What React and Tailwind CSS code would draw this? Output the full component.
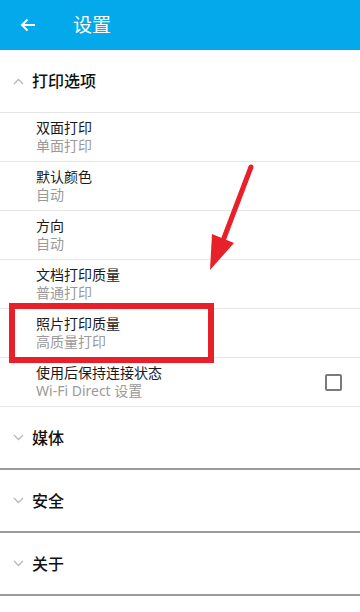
import { useState } from 'react'

const rows = [
  { title: '双面打印', sub: '单面打印' },
  { title: '默认颜色', sub: '自动' },
  { title: '方向', sub: '自动' },
  { title: '文档打印质量', sub: '普通打印' },
  { title: '照片打印质量', sub: '高质量打印' },
  { title: '使用后保持连接状态', sub: 'Wi-Fi Direct 设置', checkbox: true },
]

const collapsed = ['媒体', '安全', '关于']

function Chevron({ up }) {
  return (
    <svg width="11" height="7" viewBox="0 0 11 7" className="shrink-0">
      <path
        d={up ? 'M1 6 L5.5 1.5 L10 6' : 'M1 1 L5.5 5.5 L10 1'}
        fill="none"
        stroke="#b8b8b8"
        strokeWidth="1.3"
      />
    </svg>
  )
}

export default function App() {
  const [keep, setKeep] = useState(false)

  return (
    <div
      className="relative w-[360px] h-[612px] bg-white overflow-hidden"
      style={{ fontFamily: '"Noto Sans", "Noto Sans CJK SC", sans-serif' }}
    >
      {/* top bar */}
      <div className="flex items-center h-[50px] bg-[#03a9ea]">
        <svg width="16" height="14" viewBox="0 0 16 14" className="ml-[20px]">
          <path d="M15 7 H2 M7.5 1.5 L2 7 L7.5 12.5" fill="none" stroke="#fff" strokeWidth="2" />
        </svg>
        <span className="ml-[37px] text-[19px] text-white leading-none">设置</span>
      </div>

      {/* expanded section */}
      <div className="flex items-center gap-[8px] h-[63px] pl-[13px] border-b border-[#e6e6e6]">
        <Chevron up />
        <span className="text-[16px] font-medium text-[#111]">打印选项</span>
      </div>
      {rows.map((r) => (
        <div key={r.title} className="flex items-center h-[49px] pl-[36px] pr-[18px] border-b border-[#e6e6e6]">
          <div className="flex-1 flex flex-col">
            <span className="text-[14px] leading-[18px] text-[#1a1a1a]">{r.title}</span>
            <span className="text-[14px] leading-[18px] text-[#9a9a9a]">{r.sub}</span>
          </div>
          {r.checkbox && (
            <button
              onClick={() => setKeep(!keep)}
              className="w-[17px] h-[17px] border-2 border-[#7a7a7a] rounded-[2px]"
            />
          )}
        </div>
      ))}

      {/* collapsed sections */}
      {collapsed.map((s) => (
        <div key={s} className="flex items-center gap-[8px] h-[63px] pl-[13px] border-b-2 border-[#9c9c9c]">
          <Chevron />
          <span className="text-[16px] font-medium text-[#111]">{s}</span>
        </div>
      ))}

      {/* annotation: red box + arrow */}
      <div className="absolute left-[9px] top-[303px] w-[205px] h-[60px] border-[6px] border-[#e8202a]" />
      <svg className="absolute left-0 top-0 pointer-events-none" width="360" height="612">
        <line x1="251" y1="167" x2="224" y2="238" stroke="#e8202a" strokeWidth="5" strokeLinecap="round" />
        <polygon points="212,234 234,243 210,270" fill="#e8202a" />
      </svg>
    </div>
  )
}
